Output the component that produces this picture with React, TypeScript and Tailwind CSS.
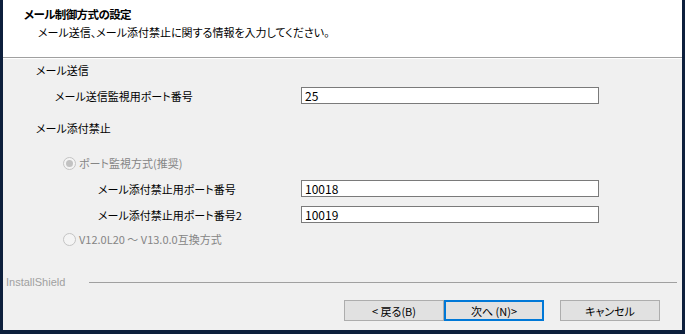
import React from "react"

const jp = "font-['MS_UI_Gothic','Noto_Sans_CJK_JP',sans-serif] [font-feature-settings:'palt']"

function Field({ label, value, indent }: { label: string; value: string; indent: string }) {
  return (
    <div className="flex h-[17px] items-center">
      <span className={`${indent} w-[268px] shrink-0 text-[11px] leading-[16px] text-black`}>{label}</span>
      <div className="ml-auto mr-[83px] flex h-[17px] w-[298px] items-center border border-[#7a7a7a] bg-white pl-[3px] text-[12px] leading-[14px] text-black">
        {value}
      </div>
    </div>
  )
}

function Radio({ checked, label }: { checked?: boolean; label: string }) {
  return (
    <div className="flex h-[16px] items-center pl-[60px]">
      <span className="flex h-[13px] w-[13px] items-center justify-center rounded-full border border-[#c4c4c4] bg-[#f4f4f4]">
        {checked && <span className="h-[7px] w-[7px] rounded-full bg-[#c2c2c2]" />}
      </span>
      <span className="ml-[3px] text-[11px] leading-[16px] text-[#858585]">{label}</span>
    </div>
  )
}

function Btn({ children, primary }: { children: React.ReactNode; primary?: boolean }) {
  return (
    <div
      className={`flex h-[21px] w-[100px] items-center justify-center bg-[#e1e1e1] text-[11px] leading-[16px] text-black ${
        primary ? "border-2 border-[#0078d7]" : "border border-[#adadad]"
      }`}
    >
      {children}
    </div>
  )
}

export default function App() {
  return (
    <div className="h-[334px] w-[685px] bg-[#0d1f3c] pb-[4px] pl-[3px] pr-[3px]">
      <div className={`flex h-[330px] flex-col bg-[#f0f0f0] ${jp}`}>
        {/* Header */}
        <div className="h-[58px] border-b border-[#a0a0a0] bg-white pl-[21px] pt-[6px]">
          <div className="text-[11.5px] font-bold leading-[16px] tracking-[-0.6px] text-black">メール制御方式の設定</div>
          <div className="mt-[2px] pl-[14px] text-[11px] leading-[16px] text-black">
            メール送信、メール添付禁止に関する情報を入力してください。
          </div>
        </div>
        <div className="h-px bg-white" />

        {/* Body */}
        <div className="mt-[3px] h-[16px] pl-[33px] text-[11px] leading-[16px] text-black">メール送信</div>
        <div className="mt-[9px]">
          <Field label="メール送信監視用ポート番号" value="25" indent="pl-[52px]" />
        </div>
        <div className="mt-[16px] h-[16px] pl-[33px] text-[11px] leading-[16px] text-black">メール添付禁止</div>
        <div className="mt-[19px]">
          <Radio checked label="ポート監視方式(推奨)" />
        </div>
        <div className="mt-[9px]">
          <Field label="メール添付禁止用ポート番号" value="10018" indent="pl-[95px]" />
        </div>
        <div className="mt-[9px]">
          <Field label="メール添付禁止用ポート番号2" value="10019" indent="pl-[95px]" />
        </div>
        <div className="mt-[8px]">
          <Radio label="V12.0L20 ～ V13.0.0互換方式" />
        </div>

        {/* Footer */}
        <div className="mt-[27px] flex h-[16px] items-center pl-[3px] pr-[5px]">
          <span className="w-[83px] font-['Liberation_Sans',sans-serif] text-[11px] leading-[16px] text-[#a0a0a0]">
            InstallShield
          </span>
          <div className="h-px flex-1 bg-[#a0a0a0]" />
        </div>
        <div className="mt-[10px] flex pl-[341px]">
          <Btn>&lt;&nbsp;戻る(B)</Btn>
          <Btn primary>次へ&nbsp;(N)&gt;</Btn>
          <div className="ml-[16px]">
            <Btn>キャンセル</Btn>
          </div>
        </div>
      </div>
    </div>
  )
}
